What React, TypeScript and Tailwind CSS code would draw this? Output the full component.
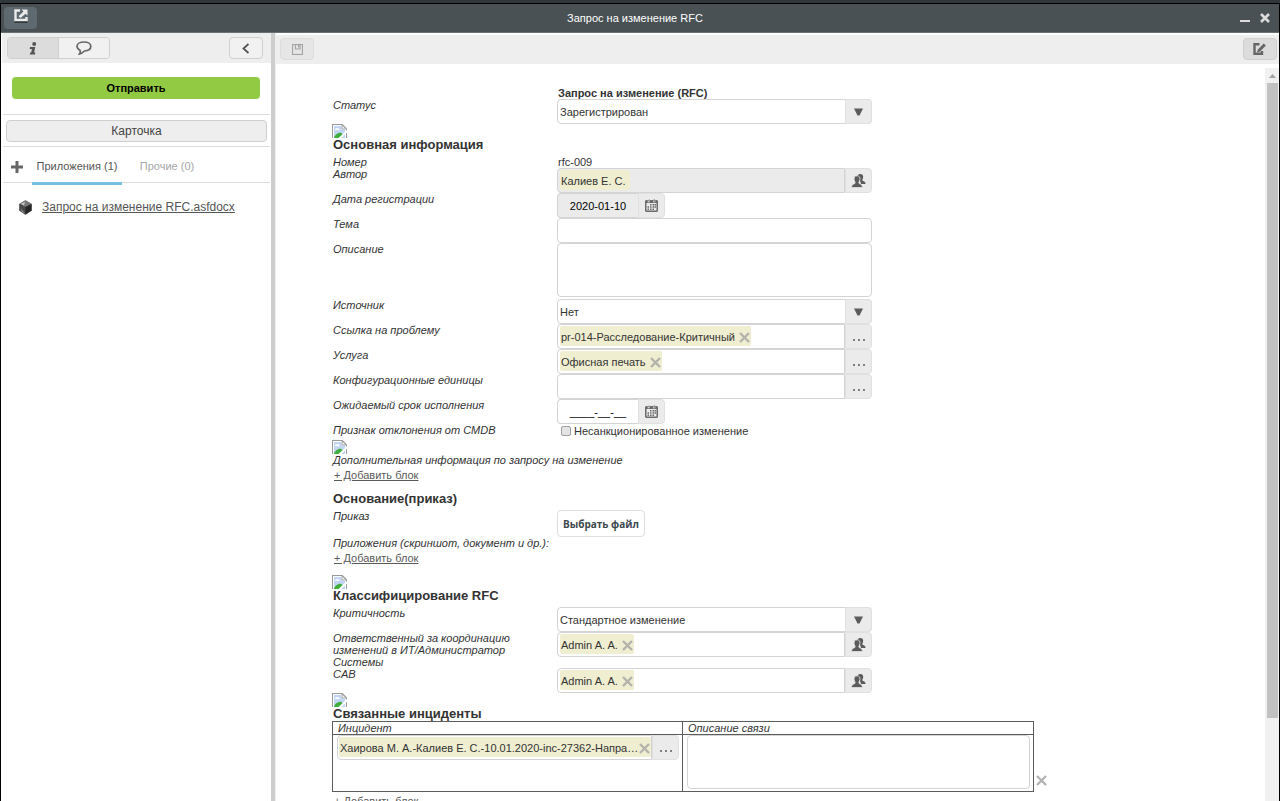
import React, { useId } from 'react';

const FIELD_BORDER = 'border border-[#d4d4d4]';
const ADDON = 'w-[27px] shrink-0 flex items-center justify-center bg-[#ebebeb] border border-[#e0e0e0] rounded-r-[4px] text-[#5c5c5c] cursor-pointer';

/* ---------- icons ---------- */

function BrokenImage() {
  return (
    <svg width="15" height="14" viewBox="0 0 15 14" className="block" role="img" aria-label="image">
      <path d="M0 0H10.5L15 4.5V14H0Z" fill="#9a9a9a" />
      <path d="M1 1H10L14 5V14H1Z" fill="#fff" />
      <path d="M2 2H9.5V5.500H13V14H2Z" fill="#c3d5f5" />
      <path d="M3 6C3 4.500 4.500 4 5.300 4.600C6.300 3.600 7.800 4.600 7.600 6Z" fill="#fff" />
      <path d="M2 14C2.500 11 6 8.600 8.500 8.800C9.500 9 10.500 9.800 11 11L9 14Z" fill="#3fae3c" />
      <path d="M15 6V8.500L9.500 14H6.500Z" fill="#fff" />
      <path d="M10 1L14.300 5H10Z" fill="#f4f4f4" stroke="#9a9a9a" strokeWidth="0.800" />
    </svg>
  );
}

function PeopleIcon() {
  return (
    <svg width="15" height="14" viewBox="0 0 15 14" fill="currentColor">
      <ellipse cx="9.300" cy="3" rx="2.900" ry="3" />
      <path d="M8.500 5H11.300V6.500C12.500 7.300 14.500 7.500 14.600 10H10Z" />
      <g stroke="#ebebeb" strokeWidth="0.800">
        <path d="M6 1.800C8.300 1.800 9.200 3.500 8.900 5.500C8.800 6.800 8.300 7.600 7.900 8.200V9.200C9 10.200 11.300 10 11.500 13.600H0.400C0.600 10 3 10.200 4.100 9.200V8.200C3.700 7.600 3.200 6.800 3.100 5.500C2.800 3.500 3.700 1.800 6 1.800Z" />
      </g>
    </svg>
  );
}

function CalendarIcon() {
  return (
    <svg width="13" height="13" viewBox="0 0 13 13" fill="#6a6a6a">
      <path fillRule="evenodd" d="M1 1H12L13 2V12L12 13H1L0 12V2ZM1.500 4V11.500H11.500V4Z" />
      <rect x="3" y="0" width="1.500" height="3" stroke="#ebebeb" strokeWidth="0.500" />
      <rect x="8.500" y="0" width="1.500" height="3" stroke="#ebebeb" strokeWidth="0.500" />
      <path d="M5 5H6.500V6.500H5ZM7.500 5H9V6.500H7.500ZM9.500 5H11V6.500H9.500ZM2.500 7.200H4V8.700H2.500ZM5 7.200H6.500V8.700H5ZM7.500 7.200H9V8.700H7.500ZM9.500 7.200H11V8.700H9.500ZM2.500 9.400H4V10.900H2.500ZM5 9.400H6.500V10.900H5ZM7.500 9.400H9V10.900H7.500Z" />
    </svg>
  );
}

function DotsIcon() {
  return (
    <svg width="12" height="2" viewBox="0 0 12 2" fill="#808080" className="mt-[7px]">
      <rect x="0" width="2" height="2" />
      <rect x="5" width="2" height="2" />
      <rect x="10" width="2" height="2" />
    </svg>
  );
}

function CrossIcon({ color = '#b3b3ac' }: { color?: string }) {
  return (
    <svg width="11" height="11" viewBox="0 0 11 11" stroke={color} strokeWidth="2.400">
      <path d="M1 1L10 10M10 1L1 10" />
    </svg>
  );
}

/* ---------- fields ---------- */

interface RowProps {
  label: string;
  children: (id: string) => React.ReactNode;
  className?: string;
}

function Row({ label, children, className = '' }: RowProps) {
  const id = useId();
  return (
    <div className={`flex items-start ${className}`}>
      <label htmlFor={id} className="w-[225px] shrink-0 pl-px pr-4 italic">{label}</label>
      <div className="w-[315px]">{children(id)}</div>
    </div>
  );
}

function SelectField({ id, value }: { id: string; value: string }) {
  return (
    <div className="relative h-[25px]">
      <select id={id} className={`appearance-none w-full h-full rounded-[4px] bg-white pl-0.5 pr-8 text-[11px] outline-none ${FIELD_BORDER}`}>
        <option>{value}</option>
      </select>
      <span className="absolute right-0 inset-y-0 w-[27px] flex items-center justify-center bg-[#ebebeb] border border-[#e0e0e0] rounded-r-[4px] pointer-events-none">
        <svg width="9" height="8" viewBox="0 0 9 8" fill="#5c5c5c"><path d="M0 0.500H9L5.500 7.500H3.500Z" /></svg>
      </span>
    </div>
  );
}

interface TagFieldProps {
  id: string;
  tags?: string[];
  people?: boolean;
  readOnly?: boolean;
  stretch?: boolean;
}

function TagField({ id, tags = [], people, readOnly, stretch }: TagFieldProps) {
  return (
    <div className="flex h-[25px]">
      <div className={`flex-1 min-w-0 flex items-start rounded-l-[4px] pt-px ${stretch ? 'pl-px' : 'pl-0.5'} ${FIELD_BORDER} ${readOnly ? 'bg-[#ebebeb]' : 'bg-white'}`}>
        {tags.map((tag) => (
          <span key={tag} className={`flex items-center justify-between h-5 rounded-xs bg-[#efeed1] pl-px whitespace-nowrap ${stretch ? 'flex-1' : 'gap-1'}`}>
            <span className="pt-0.5">{tag}</span>
            {readOnly ? (
              <span />
            ) : (
              <button type="button" aria-label="Удалить" className="cursor-pointer pt-0.5 pr-px"><CrossIcon /></button>
            )}
          </span>
        ))}
      </div>
      <button id={id} type="button" aria-label="Выбрать" className={ADDON}>{people ? <PeopleIcon /> : <DotsIcon />}</button>
    </div>
  );
}

function DateField({ id, value, readOnly }: { id: string; value: string; readOnly?: boolean }) {
  return (
    <div className="flex h-[25px]">
      <input
        id={id}
        defaultValue={value}
        readOnly={readOnly}
        className={`w-[81px] rounded-l-[4px] border-r-0 text-center text-black outline-none ${FIELD_BORDER} ${readOnly ? 'bg-[#ebebeb]' : 'bg-white'}`}
      />
      <button type="button" aria-label="Календарь" className={ADDON}><CalendarIcon /></button>
    </div>
  );
}

function SectionTitle({ children, image = true }: { children: React.ReactNode; image?: boolean }) {
  return (
    <>
      {image && <BrokenImage />}
      <h2 className="pl-px text-[13px] leading-[14px] font-bold">{children}</h2>
    </>
  );
}

function AddBlock() {
  return (
    <div className="pt-0.5 pb-2.5 pl-0.5 leading-[14px]">
      <a href="#add" className="underline text-[#5a5a5a]">+ Добавить блок</a>
    </div>
  );
}

/* ---------- panels ---------- */

function TitleBar() {
  return (
    <header className="shrink-0 flex items-center h-[29px] bg-[#495154] border-b border-[#6a7276] text-white">
      <div className="w-9 pl-[3px]">
        <button aria-label="Открыть в новом окне" className="flex w-[33px] h-[22px] items-center justify-center rounded-[4px] bg-[#5e6970] pb-1">
          <svg width="14" height="14" viewBox="0 0 14 14" fill="none">
            <path d="M6 1.500H1.500V11H12.500V8" stroke="#ebebeb" strokeWidth="2.400" />
            <path d="M0.500 13.200H13.500" stroke="#2e3538" strokeWidth="1.400" />
            <path d="M7.500 0.500H13.500V6.500L11.500 4.700L6.500 9L4.500 7.300L9.500 2.500Z" fill="#ebebeb" />
          </svg>
        </button>
      </div>
      <h1 className="flex-1 text-center text-[11px]">Запрос на изменение RFC</h1>
      <div className="w-[46px] flex items-center gap-2.5 pl-[7px]">
        <button aria-label="Свернуть" className="pt-1.5">
          <svg width="10" height="2" viewBox="0 0 10 2" className="block"><rect width="10" height="2" fill="#dcdcdc" /></svg>
        </button>
        <button aria-label="Закрыть">
          <svg width="10" height="10" viewBox="0 0 10 10" className="block" stroke="#dcdcdc" strokeWidth="2.600"><path d="M1 1L9 9M9 1L1 9" /></svg>
        </button>
      </div>
    </header>
  );
}

function Sidebar() {
  return (
    <aside className="w-[270px] shrink-0 pl-px bg-white">
      <div className="flex h-[30px] items-center justify-between bg-[#eee] pl-[5px] pr-2">
        <div className="flex h-[22px] w-[103px] rounded-[4px] border border-[#cfcfcf] overflow-hidden">
          <button aria-label="Информация" className="flex-1 flex items-center justify-center bg-[#dcdcdc] border-r border-[#cfcfcf]">
            <svg width="8" height="13" viewBox="0 0 8 13" fill="#555">
              <circle cx="5.200" cy="2" r="2" />
              <path d="M1 5H6.300L5.100 10.500H6.400L6 12.500H0.800L1.300 10.600H2.200L2.900 6.900H0.700Z" />
            </svg>
          </button>
          <button aria-label="Комментарии" className="flex-1 flex items-center justify-center bg-[#f1f1f1]">
            <svg width="16" height="14" viewBox="0 0 16 14" fill="none" stroke="#666" strokeWidth="1.700">
              <path d="M8 1C12 1 14.800 2.800 14.800 5.300C14.800 8 12 9.800 8.500 10C7 11.500 5.500 12.600 3.500 13C4.300 11.800 4.400 10.600 4 9.300C2 8.200 1 7 1 5.300C1 2.800 4 1 8 1Z" />
            </svg>
          </button>
        </div>
        <button aria-label="Назад" className="flex h-[22px] w-[34px] items-center justify-center rounded-[4px] border border-[#cfcfcf] bg-[#f1f1f1]">
          <svg width="8" height="11" viewBox="0 0 8 11" fill="none" stroke="#555" strokeWidth="1.800"><path d="M6.500 1L1.500 5.500L6.500 10" /></svg>
        </button>
      </div>

      <div className="pl-2.5 pr-[11px] pt-3.5 pb-[15px]">
        <button className="block w-full h-[22px] rounded-[4px] bg-[#92ca44] text-[11px] font-bold text-black">Отправить</button>
      </div>

      <div className="mx-px border-y border-[#dcdcdc] px-[3px] pt-[5px] pb-1">
        <button className="block w-full h-[22px] rounded-[4px] border border-[#cfcfcf] bg-[#eee] text-xs text-[#444]">Карточка</button>
      </div>

      <nav className="mx-px flex h-9 items-stretch border-b border-[#dcdcdc]">
        <button aria-label="Добавить" className="w-[29px] flex items-center pl-2 pt-1">
          <svg width="12" height="12" viewBox="0 0 12 12" stroke="#666" strokeWidth="3"><path d="M6 0V12M0 6H12" /></svg>
        </button>
        <button className="relative w-[90px] text-[#555] pt-1">
          Приложения (1)
          <span className="absolute left-0 right-0 -bottom-[3px] h-[3px] bg-[#76bfe1]" />
        </button>
        <button className="w-[90px] text-[#a6a6a6] pt-1">Прочие (0)</button>
      </nav>

      <div className="flex items-center gap-2.5 pl-[17px] pt-4">
        <svg width="13" height="15" viewBox="0 0 13 15">
          <path d="M6.500 0.500L12.500 4V10.500L6.500 14.500L0.500 10.500V4Z" fill="#444" stroke="#777" strokeWidth="0.600" />
          <path d="M6.500 0.500L12.500 4L6.500 7L0.500 4Z" fill="#777" />
          <path d="M6.500 7V14.500L0.500 10.500V4Z" fill="#4a4a4a" />
          <path d="M6.500 7V14.500L12.500 10.500V4Z" fill="#262626" />
          <path d="M2 3.800L6 2L5 5.500Z" fill="#c9c9c9" />
          <path d="M1.500 8L6 13L3 12Z" fill="#888" />
        </svg>
        <a href="#file" className="text-xs text-[#555] underline">Запрос на изменение RFC.asfdocx</a>
      </div>
    </aside>
  );
}

function RfcForm() {
  return (
    <form className="flex-1 min-w-0 pl-14 pt-[19px] text-[11px] leading-[12px]" onSubmit={(e) => e.preventDefault()}>
      <h2 className="pl-[226px] font-bold">Запрос на изменение (RFC)</h2>
      <Row label="Статус">{(id) => <SelectField id={id} value="Зарегистрирован" />}</Row>

      <SectionTitle>Основная информация</SectionTitle>
      <Row label="Номер" className="mt-1">{(id) => <output id={id} className="block pl-px">rfc-009</output>}</Row>
      <Row label="Автор">{(id) => <TagField id={id} tags={['Калиев Е. С.']} people readOnly />}</Row>
      <Row label="Дата регистрации">{(id) => <DateField id={id} value="2020-01-10" readOnly />}</Row>
      <Row label="Тема">
        {(id) => <input id={id} className={`block w-full h-[25px] rounded-[4px] px-1 outline-none ${FIELD_BORDER}`} />}
      </Row>
      <Row label="Описание" className="pb-0.5">
        {(id) => <textarea id={id} className={`block w-full h-[54px] rounded-[4px] px-1 resize-none outline-none ${FIELD_BORDER}`} />}
      </Row>
      <Row label="Источник">{(id) => <SelectField id={id} value="Нет" />}</Row>
      <Row label="Ссылка на проблему">{(id) => <TagField id={id} tags={['pr-014-Расследование-Критичный']} />}</Row>
      <Row label="Услуга">{(id) => <TagField id={id} tags={['Офисная печать']} />}</Row>
      <Row label="Конфигурационные единицы">{(id) => <TagField id={id} />}</Row>
      <Row label="Ожидаемый срок исполнения">{(id) => <DateField id={id} value="____-__-__" />}</Row>
      <Row label="Признак отклонения от CMDB">
        {(id) => (
          <label className="flex h-4 items-center gap-[3px] pl-1 pb-0.5">
            <input id={id} type="checkbox" className="appearance-none w-[10px] h-[10px] rounded-xs border border-[#a0a0a0] bg-[#e4e4e4] checked:bg-[#666]" />
            Несанкционированное изменение
          </label>
        )}
      </Row>

      <BrokenImage />
      <p className="pl-px italic">Дополнительная информация по запросу на изменение</p>
      <AddBlock />

      <SectionTitle image={false}>Основание(приказ)</SectionTitle>
      <Row label="Приказ" className="mt-1">
        {(id) => (
          <button id={id} type="button" className="block h-[27px] rounded-[4px] border border-[#dcdfe0] bg-white px-[5px] font-['Open_Sans',sans-serif] text-[10px] font-bold text-[#3b474d]">
            Выбрать файл
          </button>
        )}
      </Row>
      <p className="pl-px italic">Приложения (скриншот, документ и др.):</p>
      <AddBlock />

      <SectionTitle>Классифицирование RFC</SectionTitle>
      <Row label="Критичность" className="mt-1">{(id) => <SelectField id={id} value="Стандартное изменение" />}</Row>
      <Row label="Ответственный за координацию изменений в ИТ/Администратор Системы">
        {(id) => <TagField id={id} tags={['Admin A. A.']} people />}
      </Row>
      <Row label="CAB">{(id) => <TagField id={id} tags={['Admin A. A.']} people />}</Row>

      <SectionTitle>Связанные инциденты</SectionTitle>
      <div className="flex items-end gap-0.5">
        <table className="w-[702px] table-fixed border-collapse">
          <thead>
            <tr>
              <th className="w-[350px] border border-[#5c5c5c] pl-[5px] py-0 text-left font-normal italic">Инцидент</th>
              <th className="border border-[#5c5c5c] pl-[5px] py-0 text-left font-normal italic">Описание связи</th>
            </tr>
          </thead>
          <tbody>
            <tr>
              <td className="border border-[#5c5c5c] align-top pl-1 pr-[3px] py-0">
                <TagField id="incident" tags={['Хаирова М. А.-Калиев Е. С.-10.01.2020-inc-27362-Напра…']} stretch />
              </td>
              <td className="border border-[#5c5c5c] align-top pl-1 pr-[3px] pt-0 pb-0.5">
                <textarea aria-label="Описание связи" className={`block w-full h-[54px] rounded-[4px] px-1 resize-none outline-none ${FIELD_BORDER}`} />
              </td>
            </tr>
          </tbody>
        </table>
        <button type="button" aria-label="Удалить строку" className="pb-1.5"><CrossIcon color="#b3b3b3" /></button>
      </div>
      <AddBlock />
    </form>
  );
}

function ScrollBar() {
  return (
    <div className="w-3.5 shrink-0 flex flex-col bg-[#f1f1f1]">
      <div className="h-[15px] shrink-0 flex items-center justify-center">
        <svg width="7" height="4" viewBox="0 0 7 4" fill="#a3a3a3"><path d="M3.500 0L7 4H0Z" /></svg>
      </div>
      <div className="flex-1 pl-0.5 pr-px">
        <div className="h-[88.5%] bg-[#c1c1c1]" />
      </div>
    </div>
  );
}

export default function App() {
  return (
    <div className="flex h-screen flex-col overflow-hidden bg-black font-['Liberation_Sans',sans-serif] text-[11px] text-[#333]">
      <div className="h-[3px] shrink-0 bg-[#30373a]" />
      <div className="mt-px flex min-h-0 flex-1 flex-col mx-px bg-white">
        <TitleBar />
        <div className="flex min-h-0 flex-1">
          <Sidebar />
          <div className="w-1 shrink-0 bg-[#cdcdcd]" />
          <main className="flex min-w-0 flex-1 flex-col border-l border-[#eee]">
            <div className="mt-0.5 flex h-[29px] shrink-0 items-start justify-between bg-[#eee] pl-1 pr-0.5 pt-[3px]">
              <button aria-label="Сохранить" className="flex h-[22px] w-[34px] items-center justify-center rounded-[4px] border border-[#dcdcdc] bg-[#e6e6e6]">
                <svg width="11" height="11" viewBox="0 0 11 11" fill="none" stroke="#a3a3a3">
                  <rect x="0.500" y="0.500" width="10" height="10" strokeWidth="1.200" />
                  <path d="M3.500 0.500V5H8V0.500" strokeWidth="1.200" />
                  <path d="M6.500 1V3.500" />
                </svg>
              </button>
              <button aria-label="Редактировать" className="flex h-[22px] w-[34px] items-center justify-center rounded-[4px] border border-[#cfcfcf] bg-[#dcdcdc] pr-0.5">
                <svg width="13" height="12" viewBox="0 0 13 12" fill="none" stroke="#666">
                  <path d="M6.500 1.200H1.500V10.800H9V8" strokeWidth="2.400" />
                  <path d="M5.500 8L11.800 1.500" strokeWidth="3" />
                  <path d="M4 9.500L4.600 7L6.500 9Z" fill="#666" stroke="none" />
                </svg>
              </button>
            </div>
            <div className="mt-1 flex min-h-0 flex-1">
              <div className="flex min-w-0 flex-1 overflow-hidden">
                <RfcForm />
              </div>
              <ScrollBar />
            </div>
          </main>
        </div>
      </div>
    </div>
  );
}
